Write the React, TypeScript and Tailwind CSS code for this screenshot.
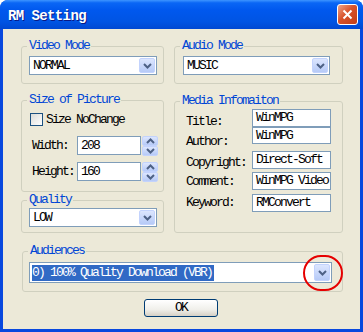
import type { ReactNode } from 'react';

const mono = "font-[family-name:'Liberation_Mono','DejaVu_Sans_Mono',monospace] text-[13px] leading-[12px] tracking-[-1.8px] text-black";

const Chevron = ({ up }: { up?: boolean }) => (
    <svg width="9" height="6" viewBox="0 0 9 6">
        <path d={up ? 'M1 5 L4.5 1.5 L8 5' : 'M1 1 L4.5 4.5 L8 1'} stroke="#4D6185" strokeWidth="2" fill="none" />
    </svg>
);

const Group = ({ title, className, children }: { title: string; className?: string; children: ReactNode }) => (
    <fieldset className={`border border-[#D0D0BF] rounded-[3px] min-w-0 ${className ?? ''}`}>
        <legend className="ml-[5px] px-[2px] h-[12px] leading-[12px] text-[#0046D5]">{title}</legend>
        {children}
    </fieldset>
);

const Select = ({ value, h = 'h-[19px]', selected }: { value: string; h?: string; selected?: boolean }) => (
    <div className={`${h} w-full flex items-stretch border border-[#7F9DB9] bg-white p-[0_1px_0_1px]`}>
        <div className="flex-1 flex items-center pl-[1px] overflow-hidden whitespace-nowrap">
            {selected ? (
                <span className="bg-[#316AC5] text-white h-[16px] leading-[16px] pr-[2px]">{value}</span>
            ) : (
                <span className="pl-[1px]">{value}</span>
            )}
        </div>
        <div className="w-[16px] my-[1px] flex items-center justify-center rounded-[2px] border border-[#C3D3FD] bg-[linear-gradient(#DCE6FE,#B6CAF7)]">
            <Chevron />
        </div>
    </div>
);

const TextBox = ({ value, className }: { value: string; className?: string }) => (
    <div className={`h-[18px] w-[79px] border border-[#7F9DB9] bg-white flex items-center pl-[3px] whitespace-nowrap overflow-hidden ${className ?? ''}`}>
        {value}
    </div>
);

const SpinRow = ({ label, value, className }: { label: string; value: string; className?: string }) => (
    <div className={`flex items-start ml-[2px] ${className ?? ''}`}>
        <div className="w-[45px] h-[19px] flex items-center">{label}</div>
        <div className="w-[64px] h-[19px] border border-[#7F9DB9] bg-white flex items-center pl-[3px]">{value}</div>
        <div className="ml-[1px] w-[16px] h-[20px] flex flex-col">
            <div className="h-[10px] flex items-center justify-center rounded-[2px] border border-[#C3D3FD] bg-[linear-gradient(#DCE6FE,#B6CAF7)]">
                <Chevron up />
            </div>
            <div className="h-[10px] flex items-center justify-center rounded-[2px] border border-[#C3D3FD] bg-[linear-gradient(#DCE6FE,#B6CAF7)]">
                <Chevron />
            </div>
        </div>
    </div>
);

export default function App() {
    return (
        <div className={`relative w-[363px] h-[332px] bg-[#0848DE] rounded-t-[8px] overflow-hidden flex flex-col ${mono}`}>
            {/* title bar */}
            <div className="h-[29px] shrink-0 flex items-center justify-between pl-[8px] pr-[5px] bg-[linear-gradient(#3D95FF_0%,#0A66F5_10%,#0058EE_35%,#0054E3_75%,#0048D2_100%)]">
                <span className="pt-[2px] text-[14px] leading-[14px] tracking-[-0.6px] font-bold text-white [text-shadow:1px_1px_#0A1883]">RM Setting</span>
                <div className="w-[21px] h-[21px] rounded-[3px] border border-white bg-[linear-gradient(135deg,#EFA58A,#D8522B_45%,#C23E16)] flex items-center justify-center">
                    <svg width="11" height="11" viewBox="0 0 11 11">
                        <path d="M1.5 1.5 L9.5 9.5 M9.5 1.5 L1.5 9.5" stroke="white" strokeWidth="2" />
                    </svg>
                </div>
            </div>

            {/* body */}
            <div className="flex-1 mx-[3px] mb-[3px] bg-[#ECE9D8] pt-[11px] pl-[18px] pr-[17px] flex flex-col">
                <div className="flex gap-[10px]">
                    {/* left column */}
                    <div className="w-[143px] flex flex-col">
                        <Group title="Video Mode">
                            <div className="pt-[4px] pl-[7px] pr-[6px] pb-[8px]">
                                <Select value="NORMAL" />
                            </div>
                        </Group>
                        <Group title="Size of Picture" className="mt-[10px]">
                            <div className="pt-[7px] pl-[8px] pb-[9px]">
                                <div className="flex items-center h-[13px]">
                                    <div className="w-[13px] h-[13px] border border-[#1C5180] bg-[linear-gradient(135deg,#DCDCD7,#FFFFFF)]" />
                                    <span className="ml-[3px]">Size NoChange</span>
                                </div>
                                <SpinRow label="Width:" value="208" className="mt-[10px]" />
                                <SpinRow label="Height:" value="160" className="mt-[6px]" />
                            </div>
                        </Group>
                        <Group title="Quality" className="mt-[2px]">
                            <div className="pt-[2px] pl-[7px] pr-[6px] pb-[5px]">
                                <Select value="LOW" />
                            </div>
                        </Group>
                    </div>

                    {/* right column */}
                    <div className="w-[169px] flex flex-col">
                        <Group title="Audio Mode">
                            <div className="pt-[4px] pl-[8px] pr-[12px] pb-[8px]">
                                <Select value="MUSIC" />
                            </div>
                        </Group>
                        <Group title="Media Infomaiton" className="mt-[11px] flex-1">
                            <div className="flex pl-[11px] pb-[20px]">
                                <div className="w-[66px] flex flex-col pt-[9px]">
                                    <span>Title:</span>
                                    <span className="mt-[8px]">Author:</span>
                                    <span className="mt-[9px]">Copyright:</span>
                                    <span className="mt-[7px]">Comment:</span>
                                    <span className="mt-[9px]">Keyword:</span>
                                </div>
                                <div className="flex flex-col pt-[2px]">
                                    <TextBox value="WinMPG" />
                                    <TextBox value="WinMPG" className="!h-[17px]" />
                                    <TextBox value="Direct-Soft" className="mt-[7px]" />
                                    <TextBox value="WinMPG Video" className="mt-[3px]" />
                                    <TextBox value="RMConvert" className="mt-[4px]" />
                                </div>
                            </div>
                        </Group>
                    </div>
                </div>

                <Group title="Audiences" className="mt-[12px] ml-[1px]">
                    <div className="pt-[5px] pl-[6px] pr-[10px] pb-[8px]">
                        <Select value="0) 100% Quality Download (VBR)" h="h-[21px]" selected />
                    </div>
                </Group>

                <button className="mt-[7px] ml-[123px] w-[74px] h-[18px] rounded-[3px] border border-[#003C74] bg-[linear-gradient(#FFFFFF,#F0EFEA_60%,#D6D0C5)] flex items-center justify-center">
                    OK
                </button>
            </div>

            {/* annotation circle */}
            <div className="absolute left-[303px] top-[255px] w-[40px] h-[36px] rounded-full border-2 border-[#E60000]" />
        </div>
    );
}
